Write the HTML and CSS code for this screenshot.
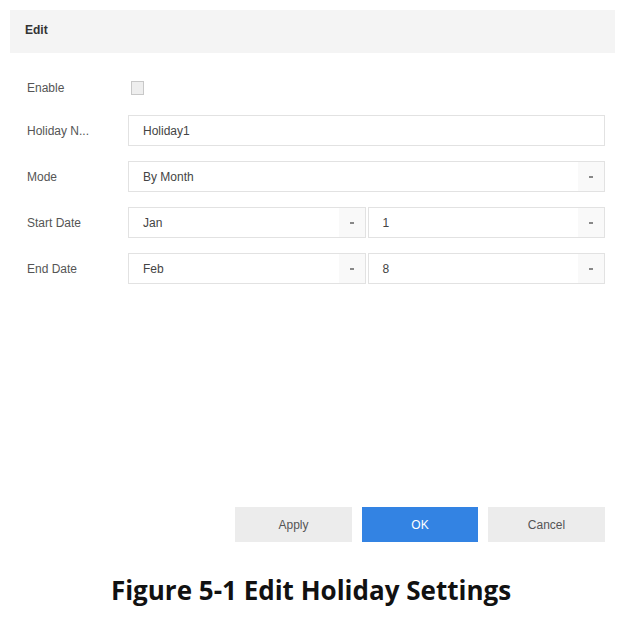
FILE: index.html
```html
<!DOCTYPE html>
<html>
<head>
<meta charset="utf-8">
<link rel="stylesheet" href="styles.css">
</head>
<body>
<div class="dialog">
  <div class="header">Edit</div>
  <div class="form">
    <div class="row">
      <div class="label">Enable</div>
      <div class="checkbox"></div>
    </div>
    <div class="row">
      <div class="label">Holiday N...</div>
      <div class="input full">Holiday1</div>
    </div>
    <div class="row">
      <div class="label">Mode</div>
      <div class="input full select"><span>By Month</span><span class="arrow"></span></div>
    </div>
    <div class="row">
      <div class="label">Start Date</div>
      <div class="pair">
        <div class="input select"><span>Jan</span><span class="arrow"></span></div>
        <div class="input select"><span>1</span><span class="arrow"></span></div>
      </div>
    </div>
    <div class="row">
      <div class="label">End Date</div>
      <div class="pair">
        <div class="input select"><span>Feb</span><span class="arrow"></span></div>
        <div class="input select"><span>8</span><span class="arrow"></span></div>
      </div>
    </div>
  </div>
  <div class="buttons">
    <div class="btn">Apply</div>
    <div class="btn primary">OK</div>
    <div class="btn">Cancel</div>
  </div>
</div>
<div class="caption">Figure 5-1 Edit Holiday Settings</div>
</body>
</html>
```
FILE: styles.css
```css
* { box-sizing: border-box; }
body {
  margin: 0;
  background: #fff;
  font-family: "Liberation Sans", Arial, sans-serif;
  color: #444;
  width: 622px;
  height: 617px;
}
.dialog {
  margin: 10px 7px 0 10px;
}
.header {
  height: 43px;
  background: #f4f4f4;
  padding-left: 15px;
  line-height: 40px;
  font-size: 12px;
  font-weight: bold;
  color: #333;
}
.form {
  padding: 25px 0 0 17px;
  display: flex;
  flex-direction: column;
  gap: 15px;
}
.row {
  display: flex;
  align-items: center;
  height: 31px;
}
.row:first-child { height: 20px; margin-bottom: 2px; }
.label {
  width: 101px;
  font-size: 12px;
  color: #555;
  white-space: nowrap;
}
.checkbox {
  width: 13px;
  height: 14px;
  border: 1px solid #c8c8c8;
  background: #eee;
  margin-left: 3px;
}
.input {
  height: 31px;
  border: 1px solid #e2e2e2;
  background: #fff;
  font-size: 12px;
  color: #444;
  padding-left: 14px;
  display: flex;
  align-items: center;
  justify-content: space-between;
}
.full { width: 477px; }
.select { padding-right: 0; }
.arrow {
  width: 26px;
  height: 29px;
  background: #f9f9f9;
  display: flex;
  align-items: center;
  justify-content: center;
}
.arrow::after {
  content: "";
  width: 4px;
  height: 2px;
  background: #888;
}
.pair {
  display: flex;
  width: 477px;
  gap: 2px;
}
.pair .input { flex: 1; }
.buttons {
  display: flex;
  justify-content: flex-end;
  gap: 10px;
  margin-top: 223px;
  padding-right: 10px;
}
.btn {
  width: 117px;
  height: 35px;
  background: #ececec;
  font-size: 12px;
  color: #555;
  display: flex;
  align-items: center;
  justify-content: center;
}
.btn.primary {
  background: #3383e3;
  color: #fff;
  width: 116px;
}
.caption {
  text-align: center;
  margin-top: 30px;
  font-family: "Open Sans", sans-serif;
  font-weight: bold;
  font-size: 26px;
  color: #111;
}
```
